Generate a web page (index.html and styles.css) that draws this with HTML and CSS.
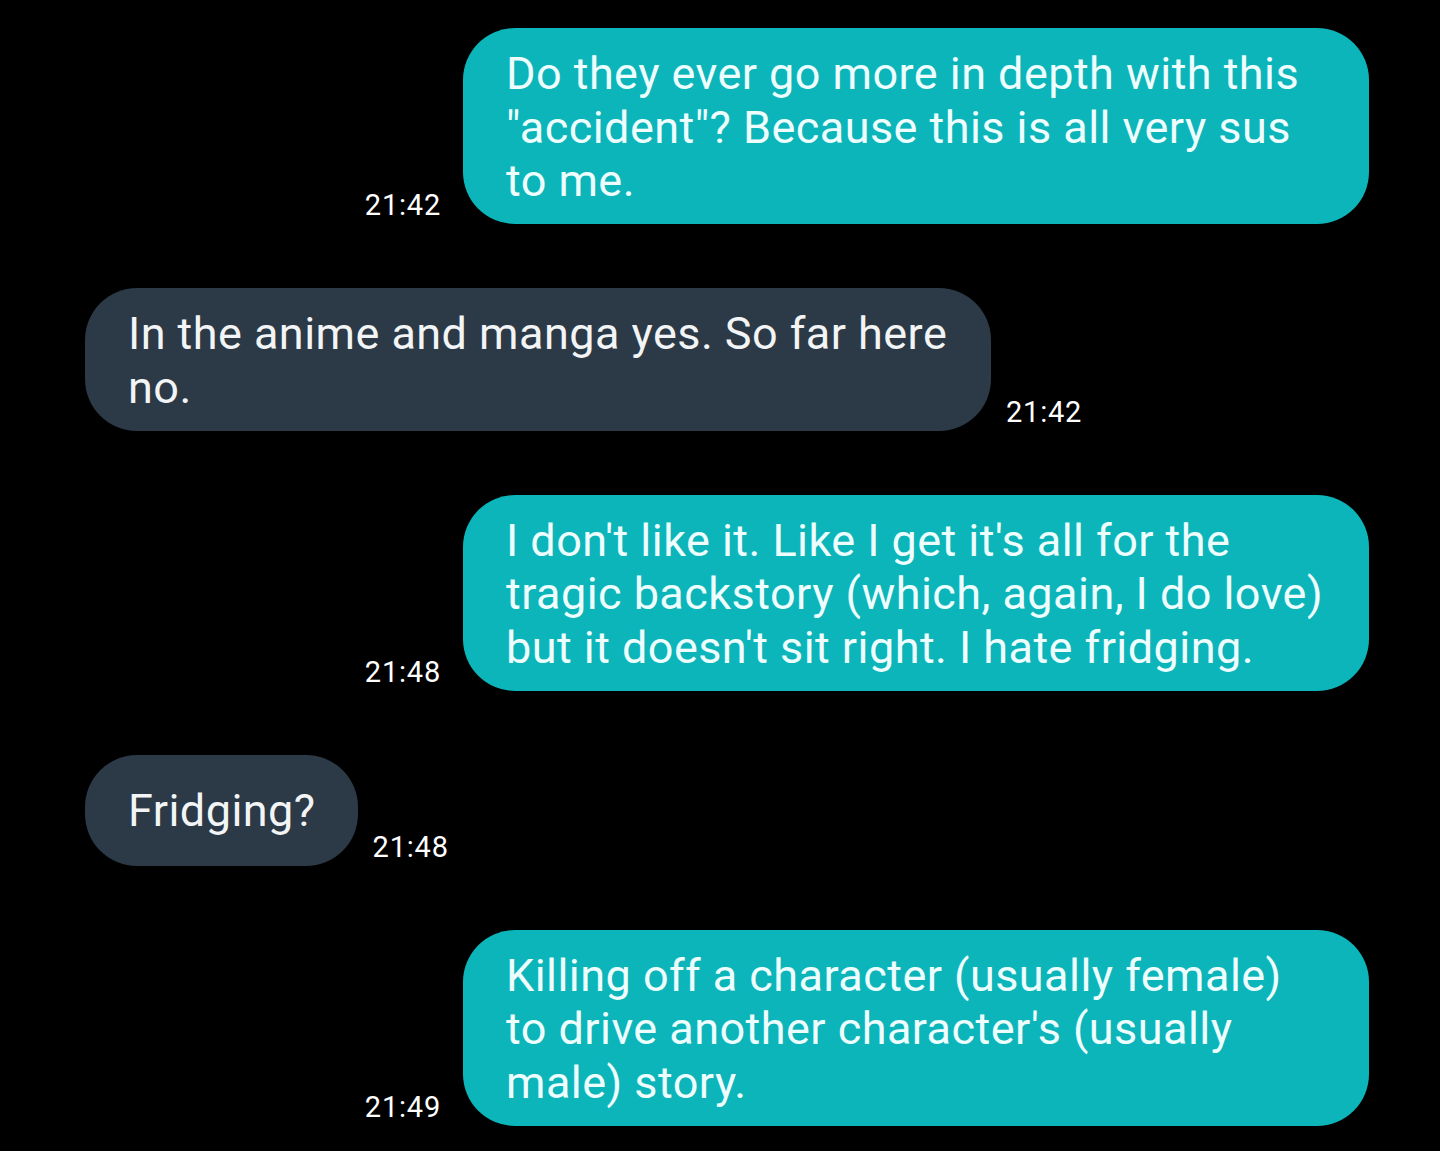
FILE: index.html
```html
<!DOCTYPE html>
<html lang="en">
<head>
<meta charset="utf-8">
<title>Chat</title>
<link rel="stylesheet" href="styles.css">
</head>
<body>
<main class="thread">
  <div class="row sent">
    <span class="time">21:42</span>
    <div class="bubble out wide">Do they ever go more in depth with this<br>"accident"? Because this is all very sus<br>to me.</div>
  </div>
  <div class="row received">
    <div class="bubble in wide">In the anime and manga yes. So far here<br>no.</div>
    <span class="time">21:42</span>
  </div>
  <div class="row sent">
    <span class="time">21:48</span>
    <div class="bubble out wide">I don't like it. Like I get it's all for the<br>tragic backstory (which, again, I do love)<br>but it doesn't sit right. I hate fridging.</div>
  </div>
  <div class="row received">
    <div class="bubble in single">Fridging?</div>
    <span class="time">21:48</span>
  </div>
  <div class="row sent">
    <span class="time">21:49</span>
    <div class="bubble out wide">Killing off a character (usually female)<br>to drive another character's (usually<br>male) story.</div>
  </div>
</main>
</body>
</html>
```

FILE: styles.css
```css
html, body {
  margin: 0;
  padding: 0;
  background: #000;
}
body {
  font-family: Roboto, "Open Sans", sans-serif;
  color: #fff;
  width: 1440px;
  height: 1151px;
  overflow: hidden;
}
.thread {
  display: flex;
  flex-direction: column;
  gap: 64px;
  padding: 28px 71px 0 85px;
}
.row {
  display: flex;
  align-items: flex-end;
}
.row.sent {
  justify-content: flex-end;
  gap: 22px;
}
.row.received {
  justify-content: flex-start;
  gap: 15px;
}
.bubble {
  font-size: 45px;
  line-height: 53.5px;
  letter-spacing: 0.45px;
  border-radius: 52px;
  padding: 19px 43px 16.5px 43px;
  white-space: nowrap;
  box-sizing: border-box;
}
.bubble.wide {
  width: 906px;
}
.bubble.single {
  padding: 29px 42px 28.5px 43px;
}
.bubble.out {
  background: #0bb5b9;
  color: #eefefe;
}
.bubble.in {
  background: #2b3a46;
  color: #f2f4f5;
}
.time {
  font-size: 29px;
  line-height: 32px;
  letter-spacing: 0.8px;
  color: #fff;
  margin-bottom: 3px;
  white-space: nowrap;
}
```
